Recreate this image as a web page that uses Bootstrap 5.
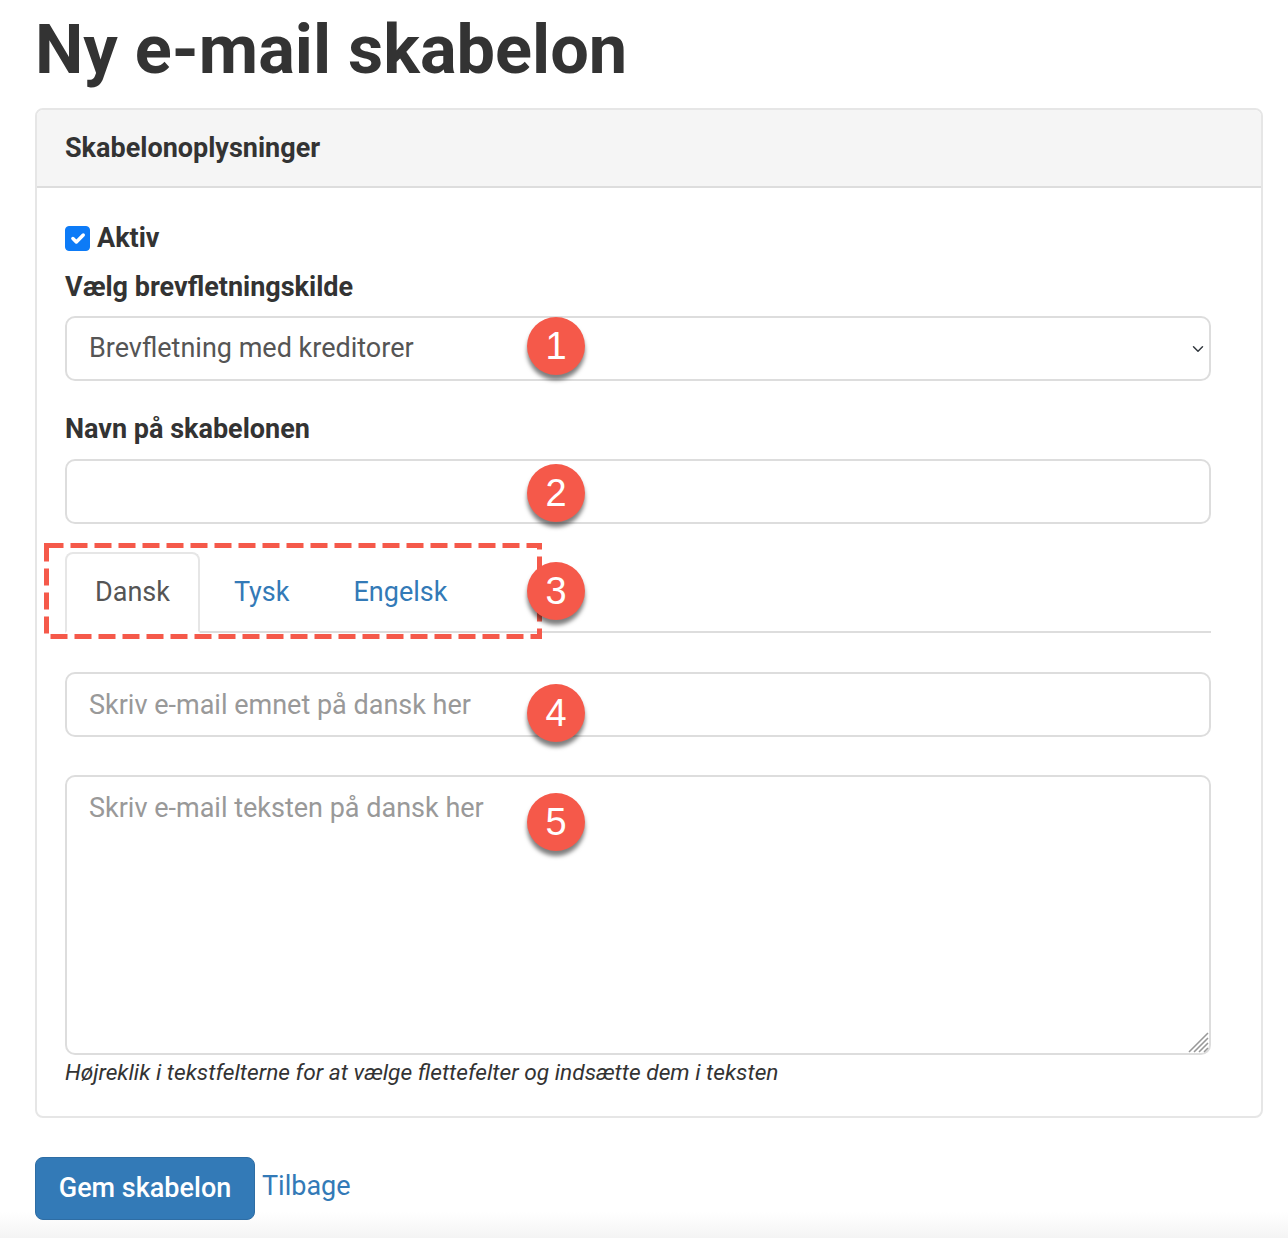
<!DOCTYPE html>
<html lang="da">
<head>
  <meta charset="UTF-8" />
  <meta name="viewport" content="width=device-width, initial-scale=1.0" />
  <title>Ny e-mail skabelon</title>
  <link href="https://cdn.jsdelivr.net/npm/bootstrap@5.3.0/dist/css/bootstrap.min.css" rel="stylesheet" />
  <script src="https://cdn.jsdelivr.net/npm/bootstrap@5.3.0/dist/js/bootstrap.bundle.min.js"></script>
  <style>
    html, body {
      height: 1238px;
      overflow: hidden;
    }
    body {
      font-family: Roboto, "Liberation Sans", sans-serif;
      font-size: 27px;
      color: #333;
      background: linear-gradient(to bottom, #fff 1212px, #f4f4f4 1238px);
    }
    .page-wrap {
      position: relative;
      height: 1238px;
      padding: 0 25px 0 35px;
    }
    .page-title {
      font-size: 68.5px;
      font-weight: 700;
      line-height: 1;
      color: #333;
      margin: 0;
      padding-top: 16px;
      height: 108px;
    }
    .tpl-card {
      height: 1010px;
      border: 2px solid #e6e6e6;
      border-radius: 8px;
      background: transparent;
    }
    .tpl-card .card-header {
      height: 78px;
      padding: 0 28px;
      display: flex;
      align-items: center;
      font-weight: 700;
      font-size: 27px;
      background: #f5f5f5;
      border-bottom: 2px solid #ddd;
      border-radius: 6px 6px 0 0;
    }
    .tpl-card .card-body {
      padding: 34px 50px 0 28px;
    }
    .tpl-label {
      font-weight: 700;
      font-size: 27px;
      line-height: 32px;
      margin: 0;
    }
    .aktiv-row {
      display: flex;
      align-items: center;
      gap: 7px;
      height: 32px;
      margin-bottom: 17px;
      padding: 0;
      min-height: 0;
    }
    .aktiv-row .form-check-input {
      width: 25px;
      height: 25px;
      margin: 0;
      float: none;
      border-radius: 4px;
      background-color: #0d7bf7;
      border-color: #0d7bf7;
    }
    .tpl-field {
      height: 65px;
      border: 2px solid #ddd;
      border-radius: 10px;
      padding: 0 22px;
      font-size: 27px;
      color: #555;
      box-shadow: none;
    }
    .tpl-field::placeholder {
      color: #999;
    }
    select.tpl-field {
      margin-top: 13px;
      background-size: 16px 12px;
      background-position: right 3px center;
    }
    .name-group {
      margin-top: 32px;
    }
    .name-group .tpl-field {
      margin-top: 14px;
    }
    .tpl-tabs {
      margin-top: 28px;
      height: 81px;
      border-bottom: 2px solid #ddd;
      margin-bottom: 39px;
    }
    .tpl-tabs .nav-link {
      height: 81px;
      padding: 0 28px;
      display: flex;
      align-items: center;
      margin-right: 4px;
      color: #337ab7;
      border: 2px solid transparent;
      border-radius: 8px 8px 0 0;
    }
    .tpl-tabs .nav-link.active {
      color: #555;
      border-color: #e6e6e6 #e6e6e6 #fff;
      background: #fff;
    }
    textarea.tpl-field {
      height: 280px;
      margin-top: 38px;
      padding-top: 14px;
      line-height: 34px;
      resize: none;
    }
    .help-line {
      font-size: 22.7px;
      font-style: italic;
      line-height: 32px;
      margin-top: 2px;
    }
    .action-row {
      display: flex;
      align-items: flex-start;
      gap: 7px;
      margin-top: 39px;
    }
    .save-btn {
      width: 220px;
      height: 63px;
      font-size: 27px;
      font-weight: 500;
      padding: 0;
      border-radius: 8px;
      background: #337ab7;
      border-color: #2e6da4;
    }
    .back-link {
      color: #337ab7;
      text-decoration: none;
      font-size: 27px;
      line-height: 58px;
    }
    /* annotation overlays */
    .num-pin {
      position: absolute;
      left: 527px;
      width: 58px;
      height: 58px;
      border-radius: 50%;
      background: #f5594a;
      color: #fff;
      font-family: "Liberation Sans", Arial, sans-serif;
      font-size: 38px;
      line-height: 58px;
      text-align: center;
      box-shadow: 0 5px 4px rgba(0, 0, 0, 0.5);
    }
    .dash-box {
      position: absolute;
      left: 42px;
      top: 541px;
    }
    .grip-mark {
      position: absolute;
      left: 1188px;
      top: 1032px;
    }
  </style>
</head>
<body>
  <div class="page-wrap">
    <h1 class="page-title">Ny e-mail skabelon</h1>

    <div class="card tpl-card">
      <div class="card-header">Skabelonoplysninger</div>
      <div class="card-body">
        <div class="form-check aktiv-row">
          <input class="form-check-input" type="checkbox" id="aktiv" checked />
          <label class="tpl-label" for="aktiv">Aktiv</label>
        </div>

        <label class="tpl-label d-block" for="kilde">Vælg brevfletningskilde</label>
        <select class="form-select tpl-field" id="kilde">
          <option>Brevfletning med kreditorer</option>
        </select>

        <div class="name-group">
          <label class="tpl-label d-block" for="navn">Navn på skabelonen</label>
          <input type="text" class="form-control tpl-field" id="navn" />
        </div>

        <!-- Language tabs -->
        <ul class="nav nav-tabs tpl-tabs">
          <li class="nav-item"><a class="nav-link active" href="#">Dansk</a></li>
          <li class="nav-item"><a class="nav-link" href="#">Tysk</a></li>
          <li class="nav-item"><a class="nav-link" href="#">Engelsk</a></li>
        </ul>

        <input type="text" class="form-control tpl-field" placeholder="Skriv e-mail emnet på dansk her" />
        <textarea class="form-control tpl-field" placeholder="Skriv e-mail teksten på dansk her"></textarea>
        <div class="help-line">Højreklik i tekstfelterne for at vælge flettefelter og indsætte dem i teksten</div>
      </div>
    </div>

    <div class="action-row">
      <button type="button" class="btn btn-primary save-btn">Gem skabelon</button>
      <a class="back-link" href="#">Tilbage</a>
    </div>

    <!-- Annotations on top of the form -->
    <svg class="dash-box" width="502" height="100" viewBox="0 0 502 100">
      <rect x="4.5" y="4.5" width="493" height="91" fill="none" stroke="#f5594a" stroke-width="5" stroke-dasharray="17 7" />
    </svg>
    <div class="num-pin" style="top: 317px">1</div>
    <div class="num-pin" style="top: 464px">2</div>
    <div class="num-pin" style="top: 562px">3</div>
    <div class="num-pin" style="top: 684px">4</div>
    <div class="num-pin" style="top: 793px">5</div>

    <!-- Textarea resize grip -->
    <svg class="grip-mark" width="21" height="21" viewBox="0 0 21 21">
      <path d="M1 20 20 1M6 20 20 6M11 20 20 11M16 20 20 16" stroke="#999" stroke-width="1.6" fill="none" />
    </svg>
  </div>
</body>
</html>
